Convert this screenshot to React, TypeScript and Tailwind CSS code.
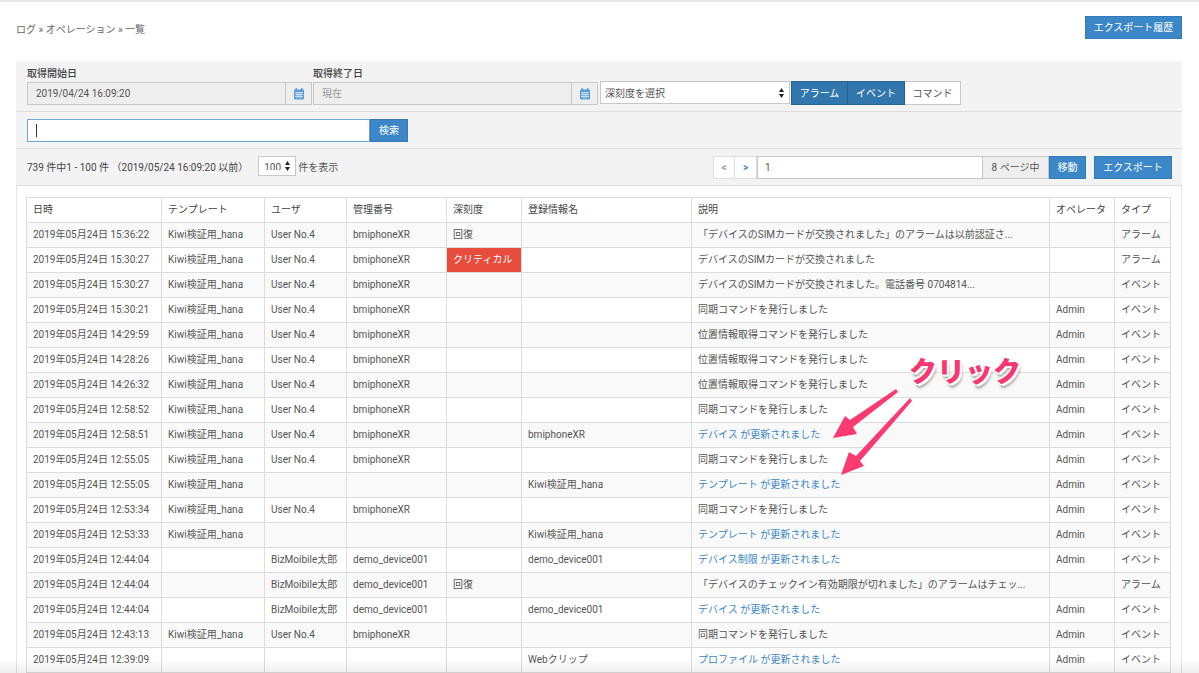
import React from 'react';

type Row = {
  date: string;
  template?: string;
  user?: string;
  device?: string;
  severity?: string;
  name?: string;
  desc: string;
  link?: boolean;
  operator?: string;
  type: string;
};

const kiwi = 'Kiwi検証用_hana';
const user4 = 'User No.4';
const xr = 'bmiphoneXR';
const taro = 'BizMoibile太郎';
const demo = 'demo_device001';
const sync = '同期コマンドを発行しました';
const location = '位置情報取得コマンドを発行しました';

const rows: Row[] = [
  { date: '2019年05月24日 15:36:22', template: kiwi, user: user4, device: xr, severity: '回復', desc: '「デバイスのSIMカードが交換されました」のアラームは以前認証さ...', type: 'アラーム' },
  { date: '2019年05月24日 15:30:27', template: kiwi, user: user4, device: xr, severity: 'クリティカル', desc: 'デバイスのSIMカードが交換されました', type: 'アラーム' },
  { date: '2019年05月24日 15:30:27', template: kiwi, user: user4, device: xr, desc: 'デバイスのSIMカードが交換されました。電話番号 0704814...', type: 'イベント' },
  { date: '2019年05月24日 15:30:21', template: kiwi, user: user4, device: xr, desc: sync, operator: 'Admin', type: 'イベント' },
  { date: '2019年05月24日 14:29:59', template: kiwi, user: user4, device: xr, desc: location, operator: 'Admin', type: 'イベント' },
  { date: '2019年05月24日 14:28:26', template: kiwi, user: user4, device: xr, desc: location, operator: 'Admin', type: 'イベント' },
  { date: '2019年05月24日 14:26:32', template: kiwi, user: user4, device: xr, desc: location, operator: 'Admin', type: 'イベント' },
  { date: '2019年05月24日 12:58:52', template: kiwi, user: user4, device: xr, desc: sync, operator: 'Admin', type: 'イベント' },
  { date: '2019年05月24日 12:58:51', template: kiwi, user: user4, device: xr, name: xr, desc: 'デバイス が更新されました', link: true, operator: 'Admin', type: 'イベント' },
  { date: '2019年05月24日 12:55:05', template: kiwi, user: user4, device: xr, desc: sync, operator: 'Admin', type: 'イベント' },
  { date: '2019年05月24日 12:55:05', template: kiwi, name: kiwi, desc: 'テンプレート が更新されました', link: true, operator: 'Admin', type: 'イベント' },
  { date: '2019年05月24日 12:53:34', template: kiwi, user: user4, device: xr, desc: sync, operator: 'Admin', type: 'イベント' },
  { date: '2019年05月24日 12:53:33', template: kiwi, name: kiwi, desc: 'テンプレート が更新されました', link: true, operator: 'Admin', type: 'イベント' },
  { date: '2019年05月24日 12:44:04', user: taro, device: demo, name: demo, desc: 'デバイス制限 が更新されました', link: true, operator: 'Admin', type: 'イベント' },
  { date: '2019年05月24日 12:44:04', user: taro, device: demo, severity: '回復', desc: '「デバイスのチェックイン有効期限が切れました」のアラームはチェッ...', type: 'アラーム' },
  { date: '2019年05月24日 12:44:04', user: taro, device: demo, name: demo, desc: 'デバイス が更新されました', link: true, operator: 'Admin', type: 'イベント' },
  { date: '2019年05月24日 12:43:13', template: kiwi, user: user4, device: xr, desc: sync, operator: 'Admin', type: 'イベント' },
  { date: '2019年05月24日 12:39:09', name: 'Webクリップ', desc: 'プロファイル が更新されました', link: true, operator: 'Admin', type: 'イベント' },
];

const headers = ['日時', 'テンプレート', 'ユーザ', '管理番号', '深刻度', '登録情報名', '説明', 'オペレータ', 'タイプ'];
const colWidths = ['w-[135px]', 'w-[103px]', 'w-[82px]', 'w-[100px]', 'w-[75px]', 'w-[170px]', 'w-[358px]', 'w-[65px]', 'w-[56px]'];

const CalendarIcon = () => (
  <svg width="10" height="12" viewBox="0 0 10 12">
    <rect x="0" y="1.5" width="10" height="10" rx="1" fill="#5b9bd5" />
    <rect x="1.5" y="0" width="1.5" height="2.5" fill="#5b9bd5" />
    <rect x="7" y="0" width="1.5" height="2.5" fill="#5b9bd5" />
    <path d="M1 4.5h8M1 6.5h8M1 8.5h8M3 4v6.5M5 4v6.5M7 4v6.5" stroke="#e6eff8" strokeWidth="0.7" />
  </svg>
);

const SelectArrows = () => (
  <svg width="5" height="10" viewBox="0 0 5 10">
    <path d="M2.5 0 5 4H0Z M2.5 10 0 6H5Z" fill="#222" />
  </svg>
);

const DateField = ({ label, value, muted }: { label: string; value: string; muted?: boolean }) => (
  <div className="w-[285px] shrink-0">
    <div className="mb-[1px] h-[14px] text-[10px] leading-[14px] font-medium text-[#444]">{label}</div>
    <div className="flex h-[23px] border border-[#c8c8c8] bg-[#eeeeee]">
      <div className={`flex flex-1 items-center pl-2 text-[10px] ${muted ? 'text-[#999]' : 'text-[#555]'}`}>{value}</div>
      <div className="flex w-[26px] items-center justify-center border-l border-[#c8c8c8]">
        <CalendarIcon />
      </div>
    </div>
  </div>
);

const BlueButton = ({ children, className = '' }: { children: React.ReactNode; className?: string }) => (
  <button className={`flex h-[23px] items-center justify-center border border-[#3379b5] bg-[#3c87c8] text-[10px] text-white ${className}`}>
    {children}
  </button>
);

const Cell = ({ children, className = '' }: { children?: React.ReactNode; className?: string }) => (
  <td className={`h-[25px] overflow-hidden border border-[#dddddd] px-[6px] pt-0 pb-[2px] whitespace-nowrap text-[#555] ${className}`}>{children}</td>
);

export default function App() {
  return (
    <div
      className="relative h-screen overflow-hidden border-t-2 border-[#e8e8e8] bg-white pr-[17px] pl-4 text-[#555]"
      style={{ fontFamily: 'Roboto, "Noto Sans CJK JP", sans-serif' }}
    >
      <div className="flex h-[59px] items-start justify-between pt-[14px]">
        <div className="pt-[7px] text-[10px] leading-[14px] text-[#666]">ログ » オペレーション » 一覧</div>
        <BlueButton className="w-[97px]">エクスポート履歴</BlueButton>
      </div>

      <div className="bg-[#f3f3f3]">
        <div className="flex h-[51px] items-start border-b border-[#dddddd] pt-[6px] pl-[11px]">
          <DateField label="取得開始日" value="2019/04/24 16:09:20" />
          <div className="ml-px">
            <DateField label="取得終了日" value="現在" muted />
          </div>
          <div className="mt-[14px] ml-[2px] flex h-[23px] w-[190px] items-center justify-between border border-[#c8c8c8] bg-white pt-px pr-[5px] pl-[4px] text-[10px] text-[#555]">
            深刻度を選択
            <SelectArrows />
          </div>
          <div className="mt-[14px] ml-px flex h-[24px] text-[10px]">
            <div className="flex w-[57px] items-center justify-center border border-[#28628f] bg-[#3276ae] text-white">アラーム</div>
            <div className="flex w-[57px] items-center justify-center border border-l-0 border-[#28628f] bg-[#3276ae] text-white">イベント</div>
            <div className="flex w-[56px] items-center justify-center border border-l-0 border-[#c8c8c8] bg-white text-[#555]">コマンド</div>
          </div>
        </div>

        <div className="flex h-[37px] items-start border-b border-[#dddddd] pt-[7px] pl-[11px]">
          <div className="flex h-[23px] w-[343px] items-center border border-[#6ea6d6] bg-white pl-2">
            <div className="h-[13px] w-px bg-[#333]" />
          </div>
          <BlueButton className="w-[38px]">検索</BlueButton>
        </div>

        <div className="flex h-[37px] items-start border-b border-[#dddddd] pt-[7px] pl-[11px]">
          <div className="pt-[5px] text-[10px] leading-[14px] text-[#444]">
            739 件中1 - 100 件 （2019/05/24 16:09:20 以前）
          </div>
          <div className="ml-[10px] flex h-[20px] w-[38px] items-center justify-between border border-[#c8c8c8] bg-white pr-[5px] pl-[5px] text-[10px]">
            <span className="h-[7px] overflow-hidden leading-[9px]">100</span>
            <SelectArrows />
          </div>
          <div className="ml-[2px] pt-[5px] text-[10px] leading-[14px]">件を表示</div>
          <div className="ml-auto flex pr-[10px]">
            <div className="flex h-[23px] w-[22px] items-center justify-center border border-[#dddddd] bg-white text-[10px] font-bold text-[#999]">&lt;</div>
            <div className="flex h-[23px] w-[22px] items-center justify-center border border-l-0 border-[#dddddd] bg-white text-[10px] font-bold text-[#3c87c8]">&gt;</div>
            <div className="flex h-[23px] w-[226px] items-center border border-[#c8c8c8] bg-white pl-[7px] text-[10px]">1</div>
            <div className="flex h-[23px] w-[66px] items-center justify-center border border-l-0 border-[#c8c8c8] bg-[#eeeeee] text-[10px]">8 ページ中</div>
            <BlueButton className="w-[37px]">移動</BlueButton>
            <BlueButton className="ml-2 w-[78px]">エクスポート</BlueButton>
          </div>
        </div>
      </div>

      <div className="border-x border-[#e4e4e4] px-[9px] pt-[11px]">
        <table className="w-[1145px] table-fixed border-collapse text-[10px]">
          <colgroup>
            {colWidths.map((w) => (
              <col key={w} className={w} />
            ))}
          </colgroup>
          <thead>
            <tr>
              {headers.map((h) => (
                <th key={h} className="h-[25px] border border-[#dddddd] px-[6px] pt-0 pb-[2px] text-left font-normal text-[#444]">{h}</th>
              ))}
            </tr>
          </thead>
          <tbody>
            {rows.map((r, i) => (
              <tr key={i} className={i % 2 === 0 ? 'bg-[#f9f9f9]' : 'bg-white'}>
                <Cell>{r.date}</Cell>
                <Cell>{r.template}</Cell>
                <Cell>{r.user}</Cell>
                <Cell>{r.device}</Cell>
                <Cell className={r.severity === 'クリティカル' ? 'bg-[#e74c3c] !text-white' : ''}>{r.severity}</Cell>
                <Cell>{r.name}</Cell>
                <Cell className={r.link ? '!text-[#3c87c8]' : ''}>{r.desc}</Cell>
                <Cell>{r.operator}</Cell>
                <Cell>{r.type}</Cell>
              </tr>
            ))}
          </tbody>
        </table>
      </div>

      {/* annotation drawn over the table */}
      <div className="absolute top-[351px] left-[909px] text-[28px] leading-[40px] font-black whitespace-nowrap text-[#f8366f] [text-shadow:-1px_-1px_0_#fff,1px_-1px_0_#fff,-1px_1px_0_#fff,1px_1px_0_#fff,2px_2px_0_#fff,2px_4px_3px_rgba(0,0,0,0.4)]">
        クリック
      </div>
      <svg className="absolute top-[380px] left-[825px]" width="100" height="100" viewBox="0 0 100 100">
        <path d="M71 7 25 38 20 34 8 56 32 52 28 45 73 10Z" fill="#fb3a72" />
        <path d="M85 16 31 74 24 70 16 93 39 84 35 79 87 19Z" fill="#fb3a72" />
      </svg>

      <div className="pointer-events-none absolute inset-x-0 bottom-0 h-[14px] bg-gradient-to-b from-transparent to-[#00000012]" />
    </div>
  );
}
